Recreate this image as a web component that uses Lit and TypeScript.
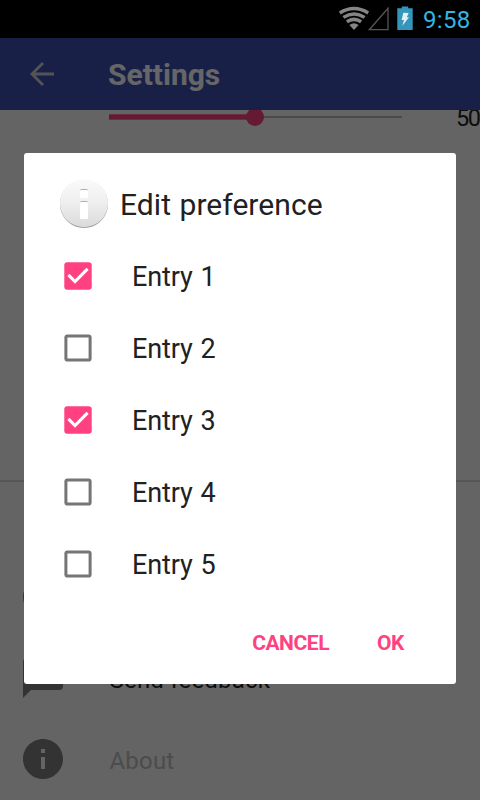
import { LitElement, html, css, svg } from "lit";
import { customElement, property, state } from "lit/decorators.js";

@customElement("check-box")
class CheckBox extends LitElement {
  @property({ type: Boolean }) checked = false;
  static styles = css`
    :host { display: block; width: 36px; height: 36px; }
    svg { display: block; }
    .on { fill: #ff4081; }
    .off { fill: none; stroke: #757575; stroke-width: 3; }
    .tick { fill: none; stroke: #fff; stroke-width: 3.1; }
  `;
  render() {
    return html`<svg width="36" height="36" viewBox="0 0 36 36">
      ${this.checked
        ? svg`<rect class="on" x="4.3" y="4.3" width="27.4" height="27.4" rx="3"/>
              <path class="tick" d="M8.4 16.900L15 23.500L27.600 10.900"/>`
        : svg`<rect class="off" x="5.9" y="5.9" width="24.2" height="24.2" rx="1.6"/>`}
    </svg>`;
  }
}

@customElement("status-bar")
class StatusBar extends LitElement {
  static styles = css`
    :host {
      display: flex; align-items: center; justify-content: flex-end;
      height: 38px; background: #000; box-sizing: border-box; padding-right: 9px;
      color: #33b5e5; font: 24px/38px Roboto, sans-serif;
    }
    svg { display: block; }
    .clock { margin-left: 9px; width: 48px; letter-spacing: 0.3px; white-space: nowrap; padding-top: 2px; }
  `;
  render() {
    return html`
      <svg width="76" height="38" viewBox="338 0 76 38">
        <g fill="none" stroke="#858585" stroke-width="3.5">
          <path d="M339.8 12.900Q354 4.300 368.200 12.900"/>
          <path d="M343.400 17.400Q354 10.600 364.600 17.400"/>
          <path d="M346.900 21.700Q354 17 361.100 21.700"/>
        </g>
        <path fill="#858585" d="M349.400 24.900Q354 21.500 358.600 24.900L354 30Z"/>
        <path fill="none" stroke="#555" stroke-width="1.3" d="M388 8.2V29.7H369.3Z"/>
        <path fill="#3496bc" d="M397.3 8.3H401.8V6.4H408.2V8.3H412.7V30H397.3Z"/>
        <path fill="#e4eff3" d="M403.3 12.8L408.8 13L406.7 17.3H409L402.2 26L404 20H401.6Z"/>
      </svg>
      <span class="clock">9:58</span>`;
  }
}

@customElement("settings-page")
class SettingsPage extends LitElement {
  static styles = css`
    :host { display: flex; flex-direction: column; height: 762px; background: #fafafa; color: #212121; font: 24px/30px Roboto, sans-serif; overflow: hidden; }
    svg { display: block; flex: none; }
    .bar { display: flex; align-items: center; height: 72px; flex: none; background: #3f51b5; color: #fff; padding-left: 23px; }
    h1 { margin: 0 0 0 47px; font-size: 30px; line-height: 40px; font-weight: 700; padding-top: 2px; }
    .scroll { flex: 1; overflow: hidden; }
    .seek { display: flex; height: 370px; padding-left: 109px; overflow: hidden; box-sizing: border-box; }
    .amount { margin: -7px 0 0 53px; white-space: nowrap; font-size: 23.5px; letter-spacing: -1.5px; }
    .group { height: 76px; border-top: 2px solid #d9d9d9; box-sizing: border-box; }
    .row { display: flex; align-items: center; height: 81px; padding-left: 19px; }
    .label { margin-left: 42.5px; padding-top: 4px; letter-spacing: 0.2px; }
    .label.faint { color: #bdbdbd; }
  `;
  row(shape: unknown, label: string, faint = false) {
    return html`<div class="row">
      <svg width="48" height="48" viewBox="0 0 24 24" fill="#808080">${shape}</svg>
      <span class="label ${faint ? "faint" : ""}">${label}</span>
    </div>`;
  }
  render() {
    return html`
      <div class="bar">
        <svg width="38" height="38" viewBox="0 0 38 38" fill="none" stroke="#d2d2d2" stroke-width="2.8">
          <path d="M31 19H9M20 8L9 19L20 30"/>
        </svg>
        <h1>Settings</h1>
      </div>
      <div class="scroll">
        <div class="seek">
          <svg width="294" height="18" viewBox="109 110 294 18">
            <rect x="255" y="116" width="147" height="2" fill="#b8b8b8"/>
            <rect x="109" y="114.3" width="146" height="5.4" fill="#ff4081"/>
            <circle cx="255" cy="117" r="9" fill="#ff4081"/>
          </svg>
          <span class="amount">50</span>
        </div>
        <div class="group"></div>
        ${this.row(svg`<path d="M12 2a10 10 0 1 0 0 20a10 10 0 1 0 0-20zm1 17h-2v-2h2zm0-4h-2v-3l3-4h-4V6h6v3z"/>`, "Help")}
        ${this.row(svg`<path d="M20 2H4a2 2 0 0 0-2 2v18l4-4h14a2 2 0 0 0 2-2V4a2 2 0 0 0-2-2z"/>`, "Send feedback")}
        ${this.row(svg`<path d="M12 2C6.48 2 2 6.48 2 12s4.48 10 10 10 10-4.480 10-10S17.520 2 12 2zm1 15h-2v-6h2v6zm0-8h-2V7h2v2z"/>`, "About", true)}
      </div>`;
  }
}

@customElement("app-root")
class AppRoot extends LitElement {
  @state() entries = [true, false, true, false, false];

  static styles = css`
    :host { display: block; position: relative; width: 480px; height: 800px; overflow: hidden; font-family: Roboto, sans-serif; }
    .scrim { position: absolute; inset: 38px 0 0; background: rgba(0, 0, 0, 0.6); display: flex; align-items: flex-start; justify-content: center; }
    .dialog { width: 432px; height: 531px; margin-top: 115px; border-radius: 3px; background: #fff; color: #212121; box-sizing: border-box; padding: 27px 36px 0; }
    .head { display: flex; align-items: center; height: 48px; margin-bottom: 12px; }
    .head svg { display: block; }
    h2 { margin: 0 0 0 12px; font-size: 30px; font-weight: 400; line-height: 40px; padding-top: 1px; letter-spacing: 0.05px; word-spacing: 1px; white-space: nowrap; }
    .entry { display: flex; align-items: center; height: 72px; cursor: pointer; }
    .name { margin-left: 36px; font-size: 27px; line-height: 36px; padding-top: 2px; letter-spacing: -0.15px; word-spacing: 1.5px; }
    .actions { display: flex; justify-content: flex-end; gap: 48px; margin-top: 28px; padding-right: 16px; }
    button { border: 0; background: none; padding: 0; color: #ff4081; font: 700 21px/30px Roboto, sans-serif; letter-spacing: -0.45px; }
  `;

  toggle(index: number) {
    this.entries = this.entries.map((on, i) => (i === index ? !on : on));
  }

  render() {
    return html`
      <status-bar></status-bar>
      <settings-page></settings-page>
      <div class="scrim">
        <section class="dialog">
          <div class="head">
            <svg width="48" height="48" viewBox="0 0 48 48">
              <defs>
                <linearGradient id="disc" x1="0" y1="0" x2="0" y2="1">
                  <stop offset="0" stop-color="#fafafa"/><stop offset="0.45" stop-color="#f0f0f0"/><stop offset="1" stop-color="#dadada"/>
                </linearGradient>
              </defs>
              <circle cx="24" cy="24" r="24" fill="#989898"/>
              <circle cx="24" cy="23.200" r="24" fill="url(#disc)"/>
              <path fill="#b0b0b0" d="M20 12V10.500Q20 9 21.500 9H26.500Q28 9 28 10.500V12ZM20 24V22.500Q20 21 21.500 21H26.500Q28 21 28 22.500V24Z"/>
              <rect x="20" y="10" width="8" height="8" rx="1" fill="#fff"/>
              <rect x="20" y="22" width="8" height="17" rx="1" fill="#fff"/>
            </svg>
            <h2>Edit preference</h2>
          </div>
          ${this.entries.map(
            (on, i) => html`<div class="entry" @click=${() => this.toggle(i)}>
              <check-box ?checked=${on}></check-box>
              <span class="name">Entry ${i + 1}</span>
            </div>`
          )}
          <div class="actions"><button>CANCEL</button><button>OK</button></div>
        </section>
      </div>`;
  }
}
